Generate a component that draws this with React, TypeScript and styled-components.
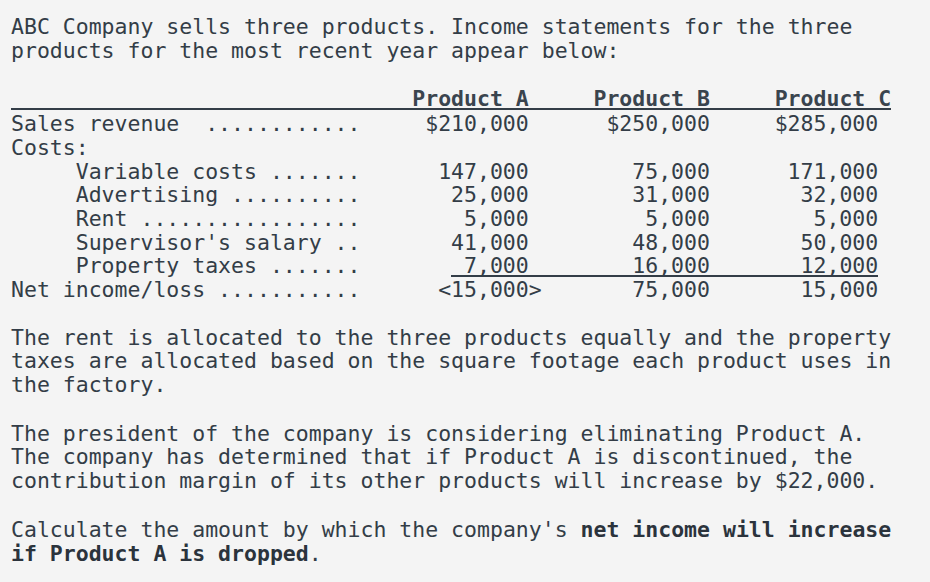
import { styled, createGlobalStyle } from 'styled-components';

const ink = '#333d47';

type Line = {
  label: string;
  indent?: boolean;
  values?: string[];
  rule?: number[];
};

const products = ['Product A', 'Product B', 'Product C'];

const lines: Line[] = [
  { label: 'Sales revenue  ............', values: ['$210,000', '$250,000', '$285,000'] },
  { label: 'Costs:' },
  { label: 'Variable costs .......', indent: true, values: ['147,000', '75,000', '171,000'] },
  { label: 'Advertising ..........', indent: true, values: ['25,000', '31,000', '32,000'] },
  { label: 'Rent .................', indent: true, values: ['5,000', '5,000', '5,000'] },
  { label: "Supervisor's salary ..", indent: true, values: ['41,000', '48,000', '50,000'] },
  {
    label: 'Property taxes .......',
    indent: true,
    values: ['7,000', '16,000', '12,000'],
    rule: [6, 14, 13],
  },
  { label: 'Net income/loss ...........', values: ['<15,000>', '75,000', '15,000'] },
];

const renderValue = (v: string) => {
  // a closing bracket hangs past the column edge, as in accounting layouts
  if (v.endsWith('>')) {
    return (
      <>
        {v.slice(0, -1)}
        <Hang>&gt;</Hang>
      </>
    );
  }
  return v;
};

const App = () => {
  return (
    <>
      <GlobalStyle />
      <Page>
        <Intro>
          ABC Company sells three products. Income statements for the three products for the most
          recent year appear below:
        </Intro>

        <Statement>
          <HeadRow>
            <Label />
            {products.map(p => (
              <Heading key={p}>{p}</Heading>
            ))}
          </HeadRow>
          {lines.map(line => (
            <Row key={line.label}>
              <Label $indent={line.indent}>{line.label}</Label>
              {line.values &&
                line.values.map((v, i) => (
                  <Value key={i}>
                    {line.rule ? (
                      <Figure $span={line.rule[i]}>{renderValue(v)}</Figure>
                    ) : (
                      renderValue(v)
                    )}
                  </Value>
                ))}
            </Row>
          ))}
        </Statement>

        <Para>
          The rent is allocated to the three products equally and the property taxes are allocated
          based on the square footage each product uses in the factory.
        </Para>
        <Para>
          The president of the company is considering eliminating Product A. The company has
          determined that if Product A is discontinued, the contribution margin of its other
          products will increase by $22,000.
        </Para>
        <Para>
          Calculate the amount by which the company's{' '}
          <strong>net income will increase if Product A is dropped</strong>.
        </Para>
      </Page>
    </>
  );
};

const GlobalStyle = createGlobalStyle`
  html, body {
    margin: 0;
    background: #f4f4f4;
  }
  body {
    font-family: "DejaVu Sans Mono", "Liberation Mono", monospace;
    font-size: 21.5px;
    color: ${ink};
  }
`;

const Page = styled.div`
  padding: 15px 11px;
  width: 68.6ch;
`;

const Intro = styled.p`
  margin: 0;
  line-height: 23.6px;
`;

const Statement = styled.div`
  margin-top: 25px;
  width: 68ch;
`;

const HeadRow = styled.div`
  display: grid;
  grid-template-columns: 27ch 13ch 14ch 14ch;
  line-height: 23px;
  box-shadow: inset 0 -2px 0 ${ink};
  margin-bottom: 2px;
`;

const Heading = styled.div`
  text-align: right;
  white-space: pre;
  font-weight: 700;
  color: #3a444e;
`;

const Row = styled.div`
  display: grid;
  grid-template-columns: 27ch 13ch 14ch 14ch;
  line-height: 23.7px;
  height: 23.7px;
`;

const Label = styled.div<{ $indent?: boolean }>`
  white-space: pre;
  padding-left: ${p => (p.$indent ? '5ch' : '0')};
`;

const Value = styled.div`
  text-align: right;
  white-space: pre;
  &:last-child {
    padding-right: 1ch;
  }
`;

const Figure = styled.span<{ $span: number }>`
  display: inline-block;
  width: ${p => p.$span}ch;
  line-height: 22px;
  text-align: right;
  box-shadow: inset 0 -2px 0 ${ink};
`;

const Hang = styled.span`
  margin-right: -1ch;
`;

const Para = styled.p`
  margin: 26px 0 0;
  line-height: 23.4px;
  ${Statement} + & {
    margin-top: 24px;
  }
  strong {
    font-weight: 700;
    color: #2b333c;
  }
`;

export default App;
